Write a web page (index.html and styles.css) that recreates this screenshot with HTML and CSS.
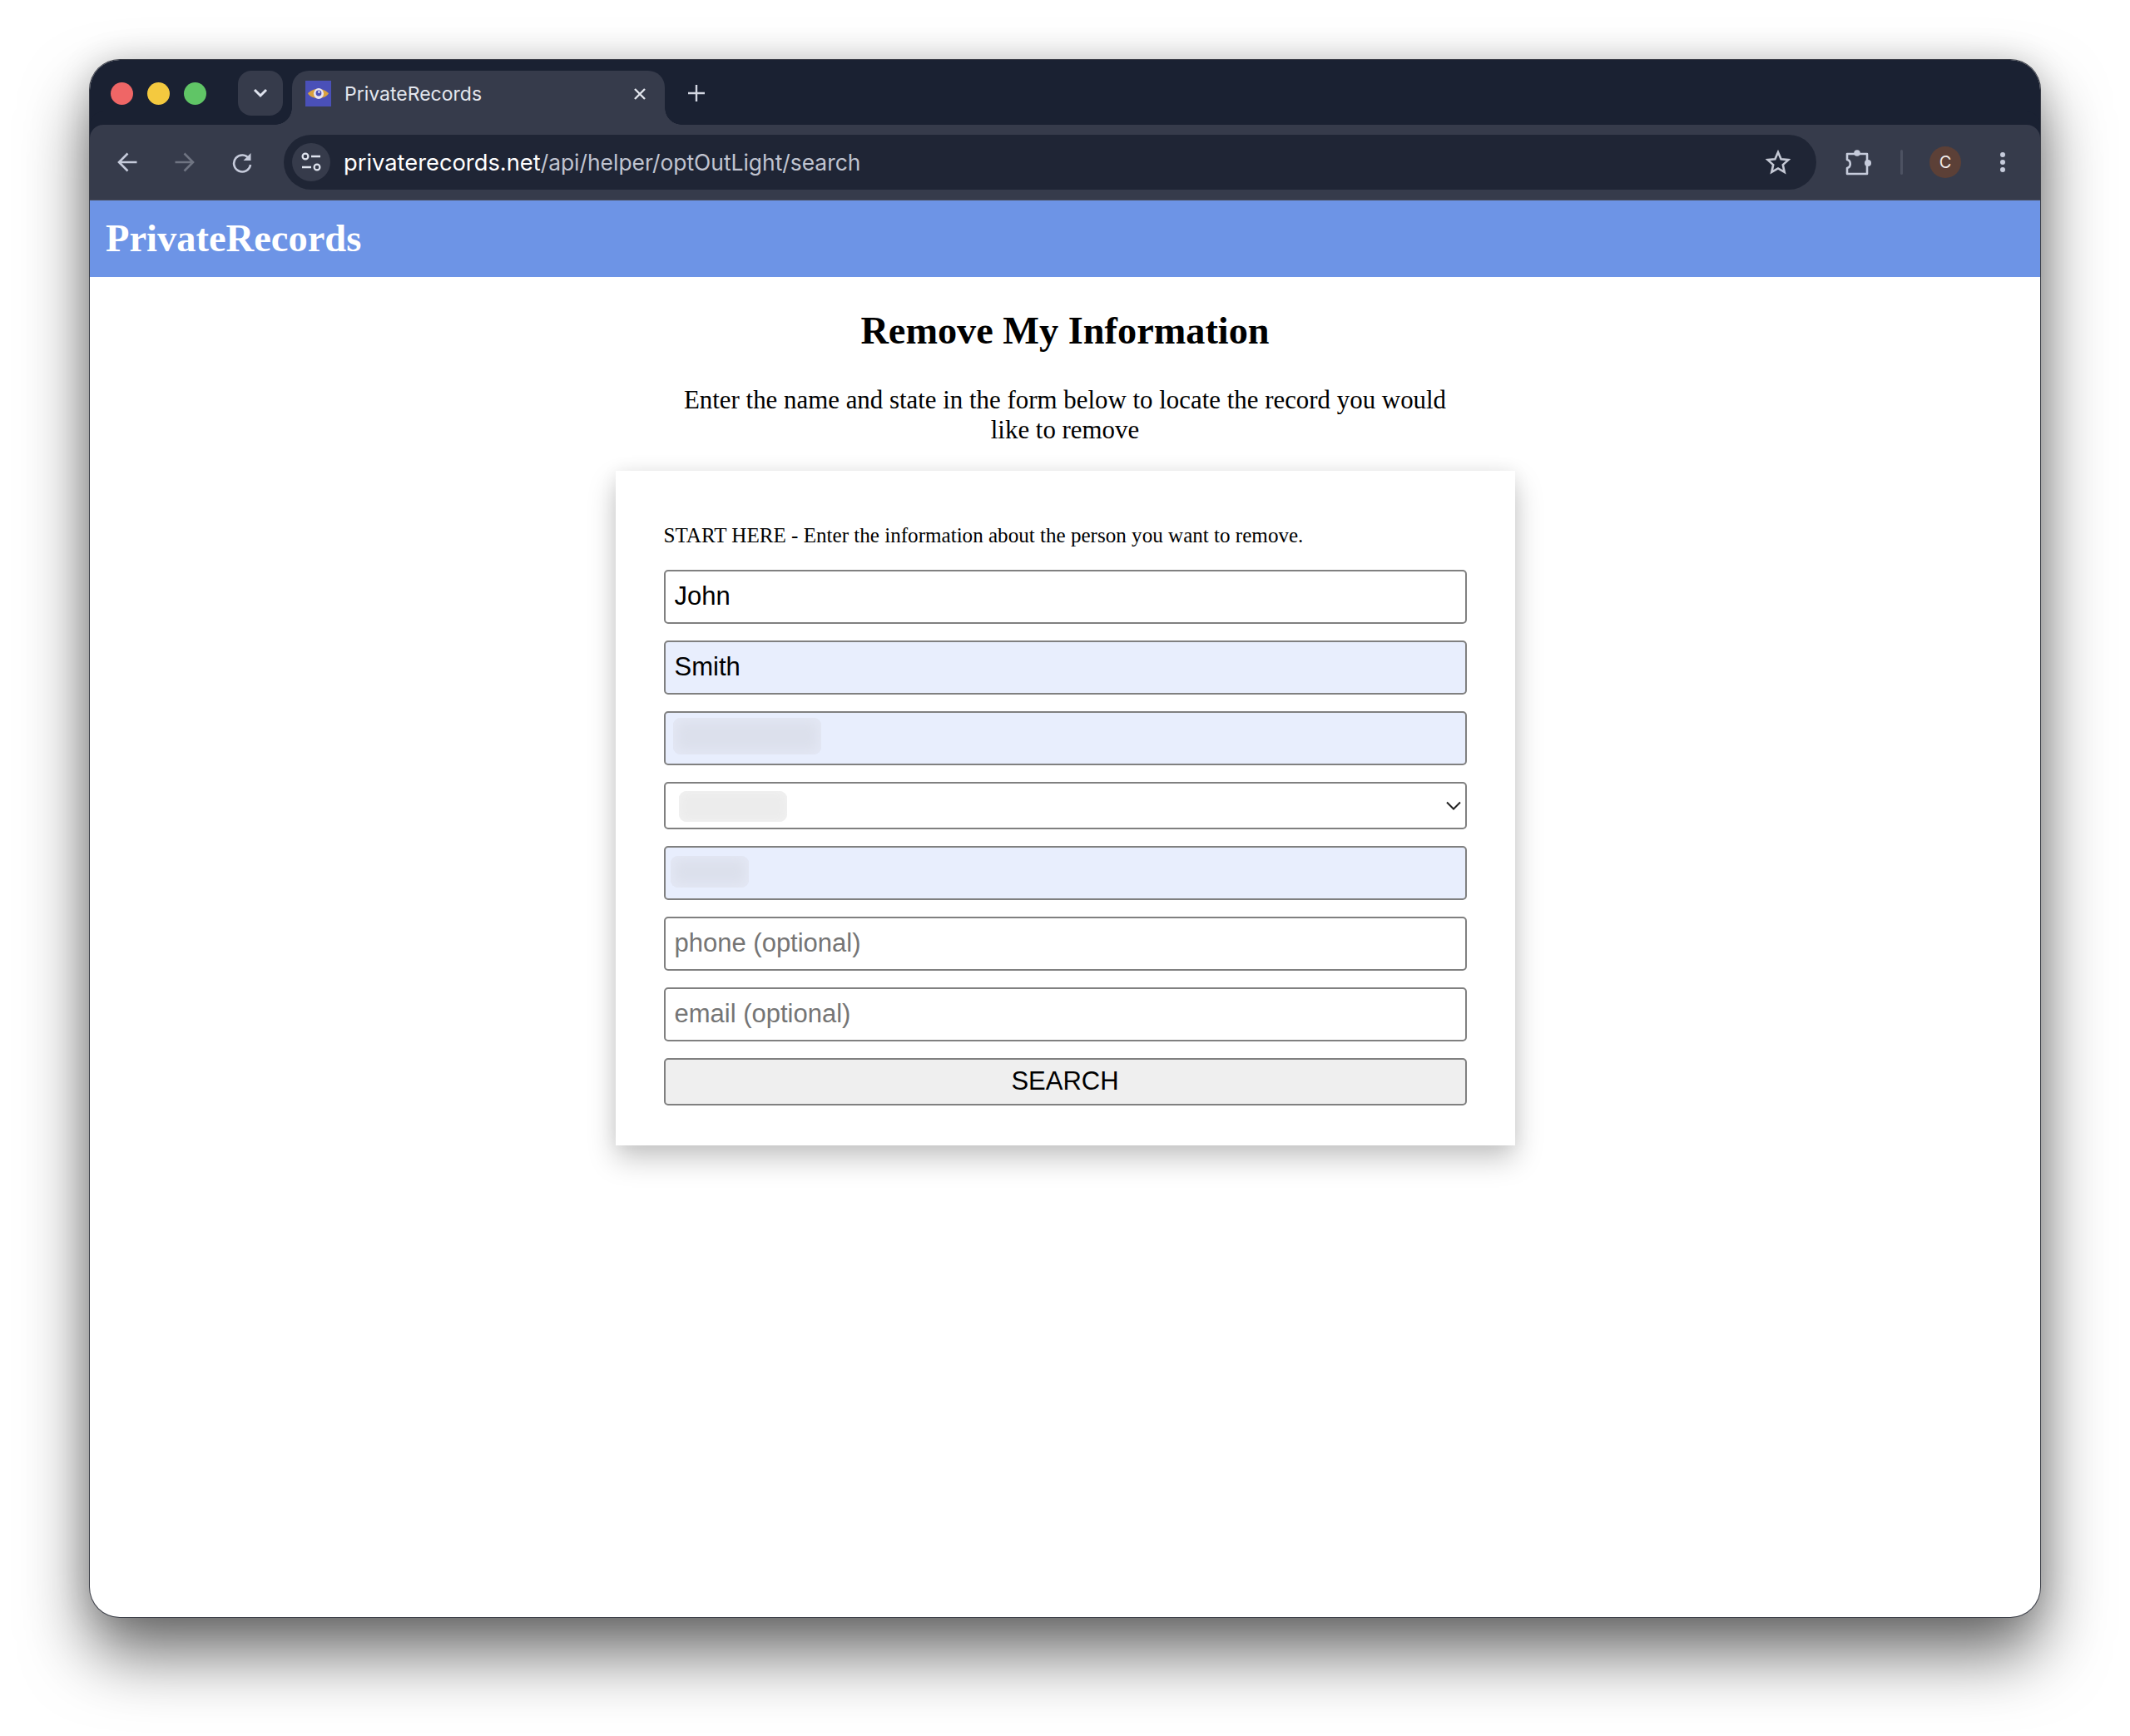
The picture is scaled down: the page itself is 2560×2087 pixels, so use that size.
FILE: index.html
```html
<!DOCTYPE html>
<html lang="en">
  <head>
    <meta charset="UTF-8" />
    <meta name="viewport" content="width=device-width, initial-scale=1.0" />
    <title>PrivateRecords</title>
    <link rel="stylesheet" href="styles.css">
  </head>
  <body>
    <div class="window">
      <!-- tab strip -->
      <div class="tabstrip">
        <div class="lights">
          <span class="light red"></span>
          <span class="light yellow"></span>
          <span class="light green"></span>
        </div>
        <div class="tab-search">
          <svg width="18" height="12" viewBox="0 0 18 12"><path d="M2 2l7 7 7-7" fill="none" stroke="#dfe3ee" stroke-width="3"/></svg>
        </div>
        <div class="tab">
          <svg class="favicon" width="31" height="31" viewBox="0 0 31 31">
            <rect width="31" height="31" fill="#4a50b8"/>
            <path d="M3 15.500C8 8 23 8 28 15.500C23 23 8 23 3 15.500Z" fill="#d9a23e"/>
            <ellipse cx="16" cy="15.500" rx="6" ry="6.500" fill="#e8e4f0"/>
            <circle cx="16" cy="15" r="3.400" fill="#4a50b8"/>
            <circle cx="16.400" cy="13.600" r="1.200" fill="#fff"/>
          </svg>
          <span class="tab-title">PrivateRecords</span>
          <svg class="tab-close" width="16" height="16" viewBox="0 0 16 16"><path d="M2 2l12 12M14 2L2 14" stroke="#e3e6ee" stroke-width="2.400"/></svg>
        </div>
        <svg class="new-tab" width="20" height="20" viewBox="0 0 20 20"><path d="M10 0v20M0 10h20" stroke="#d3d7e2" stroke-width="2.400"/></svg>
      </div>

      <!-- toolbar -->
      <div class="toolbar">
        <div class="nav-btn">
          <svg width="24" height="24" viewBox="0 0 24 24"><path d="M23.500 12H2.500M12.500 1.500L2 12l10.500 10.500" fill="none" stroke="#c6cbdb" stroke-width="2.600"/></svg>
        </div>
        <div class="nav-btn">
          <svg width="24" height="24" viewBox="0 0 24 24"><path d="M.5 12h21M11.500 1.500L22 12 11.500 22.500" fill="none" stroke="#6f7482" stroke-width="2.600"/></svg>
        </div>
        <div class="nav-btn">
          <svg width="24" height="25" viewBox="0 0 24 25"><path d="M20.500 8A10 10 0 1 0 22 15" fill="none" stroke="#c6cbdb" stroke-width="2.600"/><path d="M22.500 1v9h-9z" fill="#c6cbdb"/></svg>
        </div>
        <div class="omnibox">
          <div class="site-icon">
            <svg width="24" height="24" viewBox="0 0 24 24">
              <circle cx="5" cy="5" r="3.400" fill="none" stroke="#dfe3ee" stroke-width="2.200"/>
              <path d="M12 5h11M1 18h11" stroke="#dfe3ee" stroke-width="2.400"/>
              <circle cx="19" cy="18" r="3.400" fill="none" stroke="#dfe3ee" stroke-width="2.200"/>
            </svg>
          </div>
          <span class="url"><span class="url-host">privaterecords.net</span>/api/helper/optOutLight/search</span>
          <svg class="star" width="30" height="30" viewBox="0 0 30 30"><path d="M15 3l3.600 8.200 8.900.9-6.700 6 1.900 8.800L15 22.400 7.300 26.900l1.900-8.800-6.700-6 8.900-.9z" fill="none" stroke="#c4c8d4" stroke-width="2.600"/></svg>
        </div>
        <svg class="puzzle" width="32" height="32" viewBox="0 0 32 32">
          <path d="M2 6H26V30H2V23C7 22 7 14 2 13Z" fill="none" stroke="#c6cbdb" stroke-width="2.600" stroke-linejoin="round"/>
          <circle cx="14" cy="5" r="3.800" fill="#c6cbdb"/>
          <circle cx="27" cy="17" r="4" fill="#c6cbdb"/>
        </svg>
        <span class="divider"></span>
        <span class="avatar">C</span>
        <div class="dots"><span></span><span></span><span></span></div>
      </div>

      <!-- page -->
      <div class="site-header">PrivateRecords</div>
      <div class="content">
        <h1>Remove My Information</h1>
        <p class="intro">Enter the name and state in the form below to locate the record you would like to remove</p>
        <form class="card">
          <div class="card-label">START HERE - Enter the information about the person you want to remove.</div>
          <div class="fields">
            <input class="field" type="text" value="John">
            <input class="field filled" type="text" value="Smith">
            <div class="field-wrap">
              <input class="field filled" type="text">
              <span class="smudge smudge-blue smudge-city"></span>
            </div>
            <div class="field-wrap">
              <select class="field-select"><option></option></select>
              <span class="smudge smudge-grey smudge-state"></span>
              <svg class="chevron" width="18" height="11" viewBox="0 0 18 11"><path d="M1 1.500l8 8 8-8" fill="none" stroke="#222" stroke-width="2"/></svg>
            </div>
            <div class="field-wrap">
              <input class="field filled" type="text">
              <span class="smudge smudge-blue smudge-zip"></span>
            </div>
            <input class="field" type="text" placeholder="phone (optional)">
            <input class="field" type="text" placeholder="email (optional)">
            <button class="search-btn" type="button">SEARCH</button>
          </div>
        </form>
      </div>
    </div>
  </body>
</html>
```

FILE: styles.css
```css
* {
  box-sizing: border-box;
}
html,
body {
  margin: 0;
  padding: 0;
  background: #fff;
}
body {
  height: 2087px;
  padding: 72px 108px 0;
  overflow: hidden;
}

/* window */
.window {
  width: 2344px;
  height: 1872px;
  border-radius: 36px;
  background: #fff;
  overflow: hidden;
  box-shadow: 0 0 0 1px #3c3f48, 0 44px 80px rgba(0, 0, 0, 0.58), 0 0 40px rgba(0, 0, 0, 0.16);
  display: flex;
  flex-direction: column;
}

/* tab strip */
.tabstrip {
  height: 78px;
  flex: none;
  background: #1a2132;
  display: flex;
  align-items: flex-start;
  padding: 13px 0 0 25px;
}
.lights {
  display: flex;
  gap: 17px;
  margin-top: 14px;
}
.light {
  width: 27px;
  height: 27px;
  border-radius: 50%;
}
.red {
  background: #ef6666;
}
.yellow {
  background: #f4c93f;
}
.green {
  background: #60c566;
}
.tab-search {
  position: relative;
  z-index: 1;
  width: 54px;
  height: 54px;
  margin-left: 38px;
  border-radius: 16px;
  background: #363b4b;
  display: flex;
  align-items: center;
  justify-content: center;
}
.tab {
  position: relative;
  width: 448px;
  height: 65px;
  margin-left: 11px;
  border-radius: 20px 20px 0 0;
  background: #363b4b;
  display: flex;
  align-items: center;
  padding: 0 22px 10px 16px;
}
.tab::before,
.tab::after {
  content: "";
  position: absolute;
  bottom: 0;
  width: 20px;
  height: 20px;
}
.tab::before {
  left: -20px;
  background: radial-gradient(circle at 0 0, #1a2132 19.500px, #363b4b 20px);
}
.tab::after {
  right: -20px;
  background: radial-gradient(circle at 100% 0, #1a2132 19.500px, #363b4b 20px);
}
.tab-title {
  margin-left: 16px;
  font: 400 23px "Inter", sans-serif;
  color: #e3e6ee;
}
.tab-close {
  margin-left: auto;
}
.new-tab {
  margin: 17px 0 0 28px;
}

/* toolbar */
.toolbar {
  height: 91px;
  flex: none;
  display: flex;
  align-items: center;
  padding-left: 10px;
  background: #363b4b;
  border-radius: 16px 16px 0 0;
  border-bottom: 1px solid #4a4e5c;
  box-shadow: 0 -16px 0 #1a2132;
}
.nav-btn {
  width: 69px;
  display: flex;
  justify-content: center;
}
.omnibox {
  width: 1842px;
  height: 66px;
  margin-left: 16px;
  border-radius: 33px;
  background: #1f2535;
  display: flex;
  align-items: center;
  padding: 0 31px 0 10px;
}
.site-icon {
  width: 46px;
  height: 46px;
  border-radius: 50%;
  background: #363b4b;
  display: flex;
  align-items: center;
  justify-content: center;
}
.url {
  margin-left: 16px;
  font: 400 26.400px "Inter", sans-serif;
  color: #c0c4d0;
}
.url-host {
  font-size: 27.300px;
  color: #fff;
}
.star {
  margin-left: auto;
}
.puzzle {
  margin-left: 35px;
}
.divider {
  width: 3px;
  height: 30px;
  margin-left: 34px;
  border-radius: 2px;
  background: #4d5262;
}
.avatar {
  width: 38px;
  height: 38px;
  margin-left: 32px;
  border-radius: 50%;
  background: #5c4037;
  color: #f2ece8;
  font: 400 20px/38px "Inter", sans-serif;
  text-align: center;
}
.dots {
  margin-left: 47px;
  display: flex;
  flex-direction: column;
  gap: 3px;
}
.dots span {
  width: 6px;
  height: 6px;
  border-radius: 50%;
  background: #c6cbdb;
}

/* page */
.site-header {
  height: 92px;
  flex: none;
  background: #6d94e6;
  padding-left: 19px;
  color: #fff;
  font: 700 46.500px/92px "Liberation Serif", serif;
}
.content {
  flex: 1;
  display: flex;
  flex-direction: column;
  align-items: center;
}
h1 {
  margin: 40px 0 0;
  font: 700 46.300px/50px "Liberation Serif", serif;
  color: #000;
}
.intro {
  width: 960px;
  margin: 40px 0 0;
  font: 400 30.900px/36px "Liberation Serif", serif;
  text-align: center;
  color: #000;
}
.card {
  width: 1081px;
  height: 811px;
  margin-top: 31px;
  padding: 62px 58px 0;
  background: #fff;
  box-shadow: 0 16px 32px rgba(0, 0, 0, 0.22), 0 0 20px rgba(0, 0, 0, 0.06);
}
.card-label {
  font: 400 25.100px/32px "Liberation Serif", serif;
  color: #000;
}
.fields {
  margin-top: 25px;
  display: flex;
  flex-direction: column;
  gap: 20px;
}
.field-wrap {
  position: relative;
}
.field,
.field-select,
.search-btn {
  display: block;
  width: 100%;
  border: 2px solid #808080;
  border-radius: 5px;
  font: 400 31px "Liberation Sans", sans-serif;
  color: #000;
  outline: none;
}
.field {
  height: 65px;
  padding: 0 11px 2px;
  background: #fff;
}
.field.filled {
  background: #e8eefd;
}
.field::placeholder {
  color: #757575;
  opacity: 1;
}
.field-select {
  height: 57px;
  background: #fff;
  appearance: none;
}
.search-btn {
  height: 57px;
  padding-bottom: 2px;
  background: #efefef;
}
.chevron {
  position: absolute;
  right: 7px;
  top: 23px;
}
.smudge {
  position: absolute;
  border-radius: 9px;
}
.smudge-blue {
  background: #dce0ec;
  box-shadow: inset 0 0 14px 4px #e4e8f5;
}
.smudge-grey {
  background: #ececec;
  box-shadow: inset 0 0 10px 2px #f1f1f1;
}
.smudge-city {
  left: 11px;
  top: 8px;
  width: 178px;
  height: 44px;
}
.smudge-state {
  left: 18px;
  top: 11px;
  width: 130px;
  height: 37px;
}
.smudge-zip {
  left: 8px;
  top: 12px;
  width: 94px;
  height: 38px;
}
```
